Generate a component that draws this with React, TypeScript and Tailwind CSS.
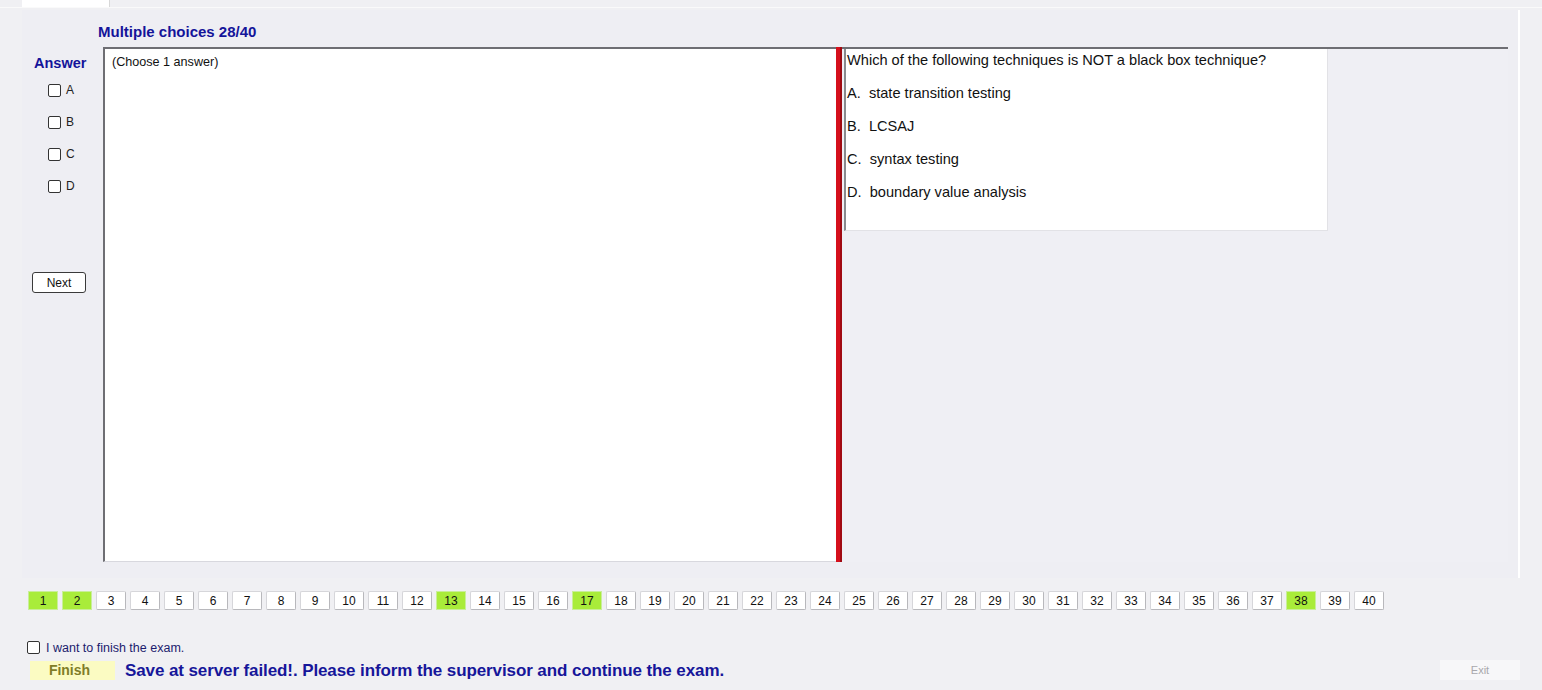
import React from "react";

const greenNums = [1, 2, 13, 17, 38];

const NumButton = ({ n }: { n: number }) => {
  const done = greenNums.includes(n);
  return (
    <div
      className={
        "w-[30px] h-[19px] flex items-center justify-center text-[12px] leading-none text-[#111] border " +
        (done
          ? "bg-[#a9ec3a] border-[#c9ee9a]"
          : "bg-white border-[#d6d6da] border-r-[#b8b8bc] border-b-[#b8b8bc] rounded-[2px]")
      }
    >
      {n}
    </div>
  );
};

const App = () => {
  const nums = Array.from({ length: 40 }, (_, i) => i + 1);
  return (
    <div className="w-[1542px] h-[690px] bg-[#f0f0f3] flex flex-col font-['Liberation_Sans',Arial,sans-serif] overflow-hidden">
      {/* tab strip */}
      <div className="h-[8px] flex border-b border-[#fafafa]">
        <div className="ml-[22px] w-[88px] h-[7px] bg-white border-r border-[#d8d8d8]" />
      </div>

      {/* group panel */}
      <div className="mx-[22px] mt-[2px] h-[568px] bg-[#eeeef3] border-r-[2px] border-white flex flex-col">
        <div className="pl-[76px] pt-[13px] h-[37px] text-[15px] leading-[18px] font-bold text-[#14149a]">
          Multiple choices 28/40
        </div>

        <div className="flex h-[515px]">
          {/* answer column */}
          <div className="w-[81px] flex flex-col">
            <div className="pl-[12px] pt-[7px] text-[14.5px] leading-[18px] font-bold text-[#14149a]">
              Answer
            </div>
            <div className="mt-[2px] flex flex-col">
              {["A", "B", "C", "D"].map((l) => (
                <div key={l} className="h-[32px] flex items-center pl-[26px] gap-[5px]">
                  <div className="w-[13px] h-[13px] border border-[#333] rounded-[2px] bg-white" />
                  <span className="text-[12px] leading-none text-[#222]">{l}</span>
                </div>
              ))}
            </div>
            <div className="mt-[70px] ml-[10px] w-[54px] h-[21px] border border-[#3a3a3a] rounded-[3px] bg-white flex items-center justify-center text-[12px] text-[#111]">
              Next
            </div>
          </div>

          {/* answer text box */}
          <div className="w-[733px] bg-white border-l-2 border-t-2 border-[#6e6e73] border-b border-b-[#d8d8de] pl-[7px] pt-[4px] text-[12.6px] text-[#111]">
            (Choose 1 answer)
          </div>

          {/* splitter */}
          <div className="w-[6px] bg-[#d5101c] border-r-2 border-[#a00a12]" />

          {/* question panel */}
          <div className="w-[666px] border-t-2 border-[#6e6e73] bg-[#efeff4] flex flex-col">
            <div className="ml-[2px] w-[484px] h-[182px] bg-white border-l-2 border-[#8a8a8e] border-b border-b-[#e2e2e6] border-r border-r-[#e2e2e6] pl-[1px] text-[14.6px] text-[#111] flex flex-col">
              <div className="h-[22px] leading-[22px]">Which of the following techniques is NOT a black box technique?</div>
              <div className="mt-[11px] h-[22px] leading-[22px]">A.&nbsp; state transition testing</div>
              <div className="mt-[11px] h-[22px] leading-[22px]">B.&nbsp; LCSAJ</div>
              <div className="mt-[11px] h-[22px] leading-[22px]">C.&nbsp; syntax testing</div>
              <div className="mt-[11px] h-[22px] leading-[22px]">D.&nbsp; boundary value analysis</div>
            </div>
          </div>
        </div>
      </div>

      {/* question numbers */}
      <div className="mt-[13px] ml-[28px] h-[19px] flex gap-[4px]">
        {nums.map((n) => (
          <NumButton key={n} n={n} />
        ))}
      </div>

      {/* finish checkbox */}
      <div className="mt-[30px] ml-[27px] h-[14px] flex items-center gap-[6px]">
        <div className="w-[13px] h-[13px] border border-[#333] rounded-[2px] bg-white" />
        <span className="text-[12.5px] leading-none text-[#1c1c6e] mt-[3px]">I want to finish the exam.</span>
      </div>

      {/* bottom row */}
      <div className="mt-[6px] h-[20px] flex items-center">
        <div className="ml-[30px] w-[85px] h-[19px] bg-[#fbfbc2] flex items-center justify-center pr-[6px] text-[14px] leading-none font-bold text-[#7f7d28]">
          Finish
        </div>
        <div className="ml-[10px] text-[17px] leading-none font-bold text-[#16169a] tracking-[-0.1px]">
          Save at server failed!. Please inform the supervisor and continue the exam.
        </div>
        <div className="ml-auto mr-[22px] w-[80px] h-[20px] bg-[#f7f7f9] flex items-center justify-center text-[11px] text-[#a8a8ac]">
          Exit
        </div>
      </div>
    </div>
  );
};

export default App;
